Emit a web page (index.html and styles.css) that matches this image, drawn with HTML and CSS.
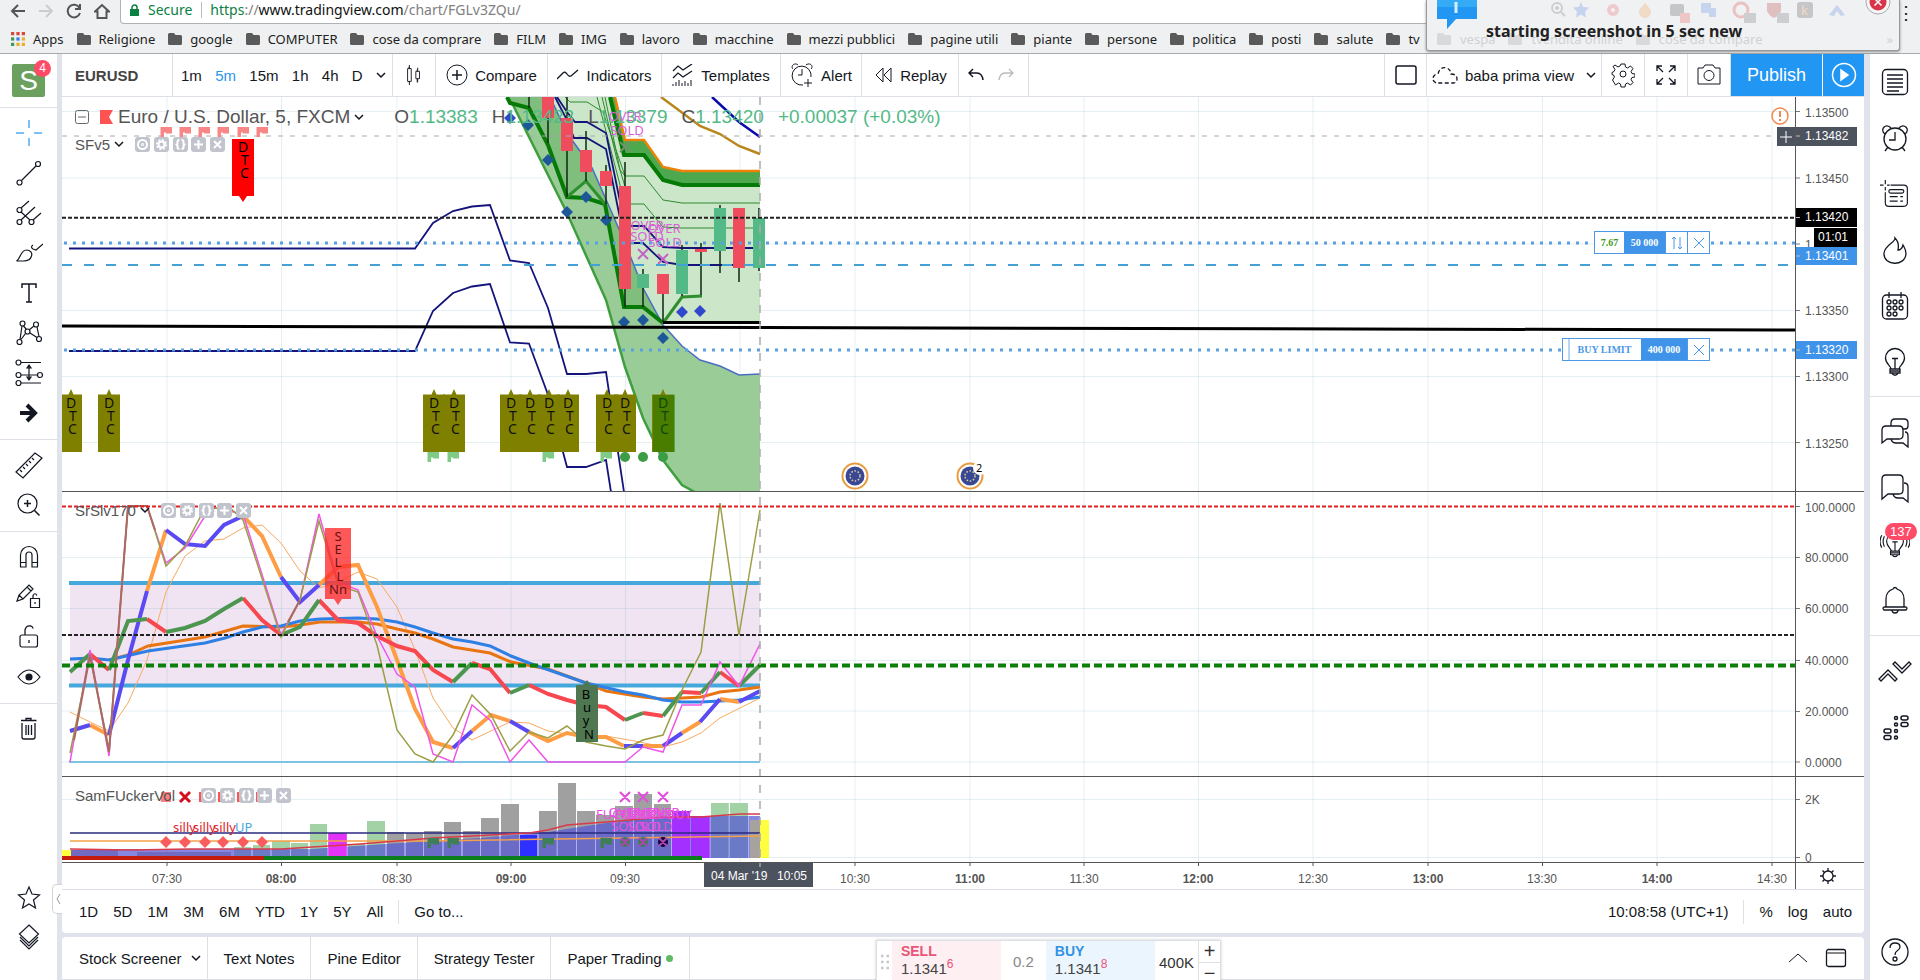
FILE: index.html
```html
<!DOCTYPE html>
<html lang="en">
<head>
<meta charset="utf-8">
<title>EURUSD chart</title>
<link rel="stylesheet" href="styles.css">
</head>
<body>
<svg class="defs" aria-hidden="true">
  <symbol id="folder" viewBox="0 0 14 12"><path d="M0 1.5Q0 0 1.5 0H6L7.5 2H12.500Q14 2 14 3.500V10.500Q14 12 12.500 12H1.500Q0 12 0 10.500Z" fill="#5a5a5a"/></symbol>
  <symbol id="chev" viewBox="0 0 10 10"><path d="M1 3l4 4 4-4"/></symbol>
  <symbol id="flag" viewBox="-6 -5 12 10"><path d="M-5.500-5H6V1.500H0V0.500H-2V5H-5.500Z"/></symbol>
  <symbol id="bulb" viewBox="0 0 30 30"><path d="M11 22c0-3-5.500-5-5.500-11a9.500 9.500 0 0 1 19 0c0 6-5.500 8-5.500 11M10 22h10v4H10zM10 24h10M12 26c1 3 5 3 6 0M15 22V12M12 11.500h6"/></symbol>
  <symbol id="lg-tools" viewBox="0 0 92 15">
    <g fill="#c1c4cd"><rect width="15" height="15" rx="3"/><rect x="19" width="15" height="15" rx="3"/><rect x="38" width="15" height="15" rx="3"/><rect x="56" width="15" height="15" rx="3"/><rect x="75" width="15" height="15" rx="3"/></g>
    <g fill="none" stroke="#fff" stroke-width="2"><circle cx="7.500" cy="7.500" r="4.500"/><circle cx="7.500" cy="7.500" r=".5"/><circle cx="26.500" cy="7.500" r="3"/><circle cx="26.500" cy="7.500" r="4.500" stroke-dasharray="2 1.500"/><path d="M44.500 3q-2 0-2 2v1.500l-1 1 1 1V10q0 2 2 2M46.500 3q2 0 2 2v1.500l1 1-1 1V10q0 2-2 2M63.500 3v9M59 7.500h9M79 4l7 7M86 4l-7 7"/></g>
  </symbol>
  <symbol id="dtc" viewBox="0 0 24 70" overflow="visible"><path d="M1 6.500H9.500L12 1l2.500 5.500H23V64H1Z" fill="#808000"/><g fill="#111" font-size="14"><text x="7" y="20">D</text><text x="10" y="33">T</text><text x="9" y="46">C</text></g></symbol>
</svg>

<header class="browser">
  <div class="address-row">
    <nav class="nav-icons" aria-label="Browser">
      <button aria-label="Back"><svg viewBox="0 0 16 16"><path d="M8 2L2 8l6 6M2 8h13"/></svg></button>
      <button class="off" aria-label="Forward"><svg viewBox="0 0 16 16"><path d="M8 2l6 6-6 6M14 8H1"/></svg></button>
      <button aria-label="Reload"><svg viewBox="0 0 16 16"><path d="M13.500 5A6.300 6.300 0 1 0 14 10M14 1v5H9"/></svg></button>
      <button aria-label="Home"><svg viewBox="0 0 16 16"><path d="M1 8.500L8 2l7 6.500H12.500V15h-9V8.500Z"/></svg></button>
    </nav>
    <div class="url">
      <svg viewBox="0 0 9 12" class="lock"><path d="M0 5h9v7H0z" fill="#0b8043"/><path d="M2 5V3.500a2.500 2.500 0 0 1 5 0V5" fill="none" stroke="#0b8043" stroke-width="1.500"/></svg>
      <span class="secure">Secure</span>
      <div class="address" role="textbox" aria-label="Address"><span class="https">https</span>://<b>www.tradingview.com</b>/chart/FGLv3ZQu/</div>
    </div>
    <span class="kebab">⋮</span>
  </div>
  <nav class="bookmarks" aria-label="Bookmarks">
    <a href="#"><svg class="apps" viewBox="0 0 13 13"><path d="M0 1.500h3M5 1.500h3M10 1.500h3" stroke="#d9493c"/><path d="M0 6.500h3" stroke="#3d9b52"/><path d="M5 6.500h3" stroke="#3b7ded"/><path d="M10 6.500h3" stroke="#e8b02e"/><path d="M0 11.500h3" stroke="#3d9b52"/><path d="M5 11.500h3M10 11.500h3" stroke="#e8b02e"/></svg>Apps</a>
    <a href="#"><svg><use href="#folder"/></svg>Religione</a>
    <a href="#"><svg><use href="#folder"/></svg>google</a>
    <a href="#"><svg><use href="#folder"/></svg>COMPUTER</a>
    <a href="#"><svg><use href="#folder"/></svg>cose da comprare</a>
    <a href="#"><svg><use href="#folder"/></svg>FILM</a>
    <a href="#"><svg><use href="#folder"/></svg>IMG</a>
    <a href="#"><svg><use href="#folder"/></svg>lavoro</a>
    <a href="#"><svg><use href="#folder"/></svg>macchine</a>
    <a href="#"><svg><use href="#folder"/></svg>mezzi pubblici</a>
    <a href="#"><svg><use href="#folder"/></svg>pagine utili</a>
    <a href="#"><svg><use href="#folder"/></svg>piante</a>
    <a href="#"><svg><use href="#folder"/></svg>persone</a>
    <a href="#"><svg><use href="#folder"/></svg>politica</a>
    <a href="#"><svg><use href="#folder"/></svg>posti</a>
    <a href="#"><svg><use href="#folder"/></svg>salute</a>
    <a href="#"><svg><use href="#folder"/></svg>tv</a>
  </nav>
  <aside class="notice">
    <svg class="bubble" viewBox="0 0 40 29"><path d="M0 0h40v19H19l-9 10V19H0z" fill="#2196f3"/><path d="M0 0h40v7H0z" fill="#35abf5"/><path d="M19 2v11" stroke="#d6effc" stroke-width="3"/></svg>
    <svg class="ghosts" viewBox="0 0 310 28"><g opacity=".22">
      <g fill="none" stroke="#555" stroke-width="2"><circle cx="8" cy="8" r="5"/><path d="M12 12l4 4M6 8h4M8 6v4"/></g>
      <path d="M32 2l2 5 6 .5-4 4 1 6-5-3-5 3 1-6-4-4 6-.5z" fill="#2f6fe0"/><circle cx="64" cy="10" r="6" fill="#e44"/><circle cx="64" cy="10" r="2" fill="#fff"/>
      <path d="M96 2c1 4 6 6 6 10a6 6 0 0 1-12 0c0-4 5-6 6-10z" fill="#f08a1d"/><rect x="121" y="4" width="14" height="12" rx="2" fill="#333"/><rect x="131" y="13" width="10" height="10" fill="#e33"/>
      <path d="M152 3h10v10h-10zM160 8h7v9h-7z" fill="#3c70dd"/><circle cx="192" cy="10" r="7" fill="none" stroke="#d22" stroke-width="3"/><path d="M195 13h12v10h-12z" fill="#555"/>
      <path d="M218 3h14v8q-2 5-7 7-5-2-7-7z" fill="#a11"/><path d="M228 13h12v10h-12z" fill="#555"/><rect x="248" y="2" width="16" height="16" rx="3" fill="#333"/><text x="252" y="15" fill="#f82" font-size="13">k</text>
      <path d="M280 15l8-10 8 10-4 1-4-5-3 5z" fill="#3c70dd"/></g></svg>
    <span class="ghost-links"><i><svg><use href="#folder"/></svg>vespa</i><i><svg><use href="#folder"/></svg>tvendita online</i><i><svg><use href="#folder"/></svg>cose da compare</i><i class="more">»</i></span>
    <strong>starting screenshot in 5 sec new</strong>
    <button class="close" aria-label="Close"><svg viewBox="0 0 26 26"><circle cx="13" cy="13" r="12" fill="#f6f6f6" stroke="#aaa"/><circle cx="13" cy="13" r="8.500" fill="#d8344a"/><path d="M9.500 9.500l7 7M16.500 9.500l-7 7" stroke="#fff" stroke-width="1.500"/></svg></button>
  </aside>
</header>

<div class="app">
  <nav class="left-bar" aria-label="Drawing tools">
    <div class="profile"><button class="avatar">S</button><span class="badge">4</span></div>
    <div class="tools">
      <button aria-label="Cross"><svg viewBox="0 0 28 28" class="cross"><path d="M14 1v8M14 19v8M1 14h8M19 14h8"/></svg></button>
      <button aria-label="Trend line"><svg viewBox="0 0 28 28"><circle cx="4.500" cy="23.500" r="2.500"/><circle cx="23" cy="5" r="2.500"/><path d="M6.500 21.500L21 7"/></svg></button>
      <button aria-label="Pitchfork"><svg viewBox="0 0 28 28"><circle cx="4.500" cy="11" r="2.500"/><circle cx="4.500" cy="23" r="2.500"/><circle cx="16.500" cy="23" r="2.500"/><path d="M6 9l8-7M6 21L20 8M18 21l8-7M6 13l9 8"/></svg></button>
      <button aria-label="Brush"><svg viewBox="0 0 28 28"><path d="M1.500 22c4-2 4-11 10-11 4 0 6 3 5 6-1 4-5 5-8 5zM28 5l-7 6-3-1q-3-2 0-4"/></svg></button>
      <button aria-label="Text"><svg viewBox="0 0 28 28"><path d="M7 9V5h14v4M14 5v18M11 23h6" stroke-width="1.500"/></svg></button>
      <button aria-label="Pattern"><svg viewBox="0 0 28 28"><circle cx="7.500" cy="4.500" r="2.500"/><circle cx="21" cy="5.500" r="2.500"/><circle cx="12.500" cy="12.500" r="2.500"/><circle cx="4.500" cy="23" r="2.500"/><circle cx="24" cy="20" r="2.500"/><path d="M7 7L5 20.500M8.500 7l3 3.500M19 7l-5 4M22 8l2 9.500M10.500 14.500l-4.500 6M15 14l7 4.500"/></svg></button>
      <button aria-label="Projection"><svg viewBox="0 0 28 28"><circle cx="3.500" cy="3.500" r="2.500"/><circle cx="3.500" cy="16" r="2.500"/><circle cx="25" cy="16" r="2.500"/><circle cx="3.500" cy="24" r="2.500"/><path d="M6 3.500h20M6 16h16.500M6 24h20M14 7v13M14 6l-2 3h4zM14 21l-2-3h4z"/></svg></button>
      <button aria-label="Arrow"><svg viewBox="0 0 28 28"><path d="M5 14h14M12 6l8 8-8 8" stroke-width="4"/></svg></button>
    </div>
    <div class="tools">
      <button aria-label="Measure"><svg viewBox="0 0 28 28"><path d="M1 21L20 2l7 5L8 27zM5 19l2 2M8 16l2 2M11 13l2 2M14 10l2 2M17 7l2 2"/></svg></button>
      <button aria-label="Zoom in"><svg viewBox="0 0 28 28"><circle cx="12.500" cy="12.500" r="9.500"/><path d="M19.500 19.500l5 5M9 12.500h7M12.500 9v7" stroke-width="1.500"/></svg></button>
    </div>
    <div class="tools">
      <button aria-label="Magnet"><svg viewBox="0 0 28 28"><path d="M5.500 24V12a8.500 8.500 0 0 1 17 0v12h-5.500V12a3 3 0 0 0-6 0v12zM5.500 19.500H11M17 19.500h5.500"/></svg></button>
      <button aria-label="Stay in drawing mode"><svg viewBox="0 0 28 28"><path d="M2 18l2-6L14 2l4 4L8 16zM4 12l4 4M12 4l4 4M15.500 15.500h9v9h-9zM18 15.500v-3q2-3.500 4 0M20 19v2"/></svg></button>
      <button aria-label="Lock"><svg viewBox="0 0 28 28"><rect x="5" y="12" width="17.500" height="12" rx="2"/><path d="M10 12V7q1-5 6-4 2 1 2 2.500M14 17v3" stroke-width="1.300"/></svg></button>
      <button aria-label="Hide"><svg viewBox="0 0 28 28"><path d="M3 14q11-14 22 0-11 14-22 0z"/><circle cx="14" cy="14" r="3" fill="#131722"/></svg></button>
    </div>
    <div class="tools last">
      <button aria-label="Remove"><svg viewBox="0 0 28 28"><path d="M7 8v14q0 2 2 2h9q2 0 2-2V8M6 5.500h15.500M11 5.500V3.500h5v2M11 10v10M13.500 10v10M16.500 10v10" stroke-width="1.300"/></svg></button>
    </div>
    <div class="tools bottom">
      <button aria-label="Favorites"><svg viewBox="0 0 28 28"><path d="M14 3l3 7 7.500 1-6 5 2 8-6.500-4-6.500 4 2-8-6-5L11 10z"/></svg></button>
      <button aria-label="Object tree"><svg viewBox="0 0 28 28"><path d="M14 1l9.500 9L14 19 4.500 10zM5 13l9 9 9-9M5 16l9 9 9-9"/></svg></button>
    </div>
    <button class="handle" aria-label="Collapse"><svg viewBox="0 0 6 12"><path d="M5 1L2 6l3 5"/></svg></button>
  </nav>

  <main class="center">
    <section class="chart-card">
      <div class="top-bar">
        <button class="symbol">EURUSD</button>
        <div class="intervals"><button>1m</button><button class="on">5m</button><button>15m</button><button>1h</button><button>4h</button><button>D</button><button aria-label="More intervals"><svg class="chev"><use href="#chev"/></svg></button></div>
        <button class="cell w43" aria-label="Candles"><svg class="i20" viewBox="0 0 20 24"><path d="M4.500 3v17M13.500 6v14"/><path d="M3 5h4v14H3zM12 8h4v8h-4z" fill="#fff"/><path d="M5 1v4M5 19v4M14 4v4M14 16v4"/></svg></button>
        <button class="cell w112"><svg class="i22" viewBox="0 0 22 22"><circle cx="11" cy="11" r="10"/><path d="M11 6v10M6 11h10" stroke-width="1.500"/></svg>Compare</button>
        <button class="cell w114"><svg class="i22" viewBox="0 0 22 22"><path d="M0 15l6-6q2-2 4 1t4 2l7-6" stroke-width="1.300"/></svg>Indicators</button>
        <button class="cell w118"><svg class="i22" viewBox="0 0 22 22"><path d="M1 7l5-5 5 4 9-6M1 14l5-5 5 4 9-6" stroke-width="1.300"/><path d="M1 20v2M4 18v4M7 16v6M10 19v3M13 17v5M16 19v3M19 16v6"/></svg>Templates</button>
        <button class="cell w81"><svg class="i24" viewBox="0 0 24 26"><path d="M13 23A9.500 9.500 0 1 1 21 15M12 7v6H8M3 7C0 4 5 0 8 3M16 3c4-3 8 1 5 4M18 17v8M14 21h8"/></svg>Alert</button>
        <button class="cell w96"><svg class="i20" viewBox="0 0 20 20"><path d="M10 3L3 10l7 7zM18 3l-7 7 7 7z"/></svg>Replay</button>
        <div class="cell undo"><button aria-label="Undo"><svg class="i16" viewBox="0 0 16 16"><path d="M5 2L1 6l4 4M1 6h8q5 0 6 7" stroke-width="1.500"/></svg></button><button aria-label="Redo"><svg class="i16 off" viewBox="0 0 16 16"><path d="M11 2l4 4-4 4M15 6H7Q2 6 1 13" stroke-width="1.300"/></svg></button></div>
        <span class="grow"></span>
        <button class="cell w43 first" aria-label="Layout"><svg class="i24" viewBox="0 0 24 24"><rect x="2" y="3" width="20" height="18" rx="2" stroke-width="1.500"/></svg></button>
        <button class="cell w175"><svg class="i26" viewBox="0 0 26 20"><path d="M4 18q-5-3-2-7 1-2 4-2 2-8 9-6 4 2 4 6 6 0 6 5 0 3-3 4z" stroke-dasharray="4 2.500" stroke-width="1.300"/></svg>baba prima view<svg class="chev"><use href="#chev"/></svg></button>
        <button class="cell w43" aria-label="Settings"><svg class="i24" viewBox="0 0 24 24"><path d="M10 2h4l.5 3 2 1 3-2 2.500 2.500-2 3 1 2 3 .5v3l-3 .5-1 2 2 3-2.500 2.500-3-2-2 1-.5 3h-4l-.5-3-2-1-3 2L1.500 18l2-3-1-2L1 12.500v-2l2-1 1-2-2-3L4 3l3 2 2-1z" transform="translate(0 -1)"/><circle cx="12" cy="11" r="3"/></svg></button>
        <button class="cell w43" aria-label="Fullscreen"><svg class="i20" viewBox="0 0 20 20"><path d="M1 6V1h5M1 1l6 6M14 1h5v5M19 1l-6 6M1 14v5h5M1 19l6-6M19 14v5h-5M19 19l-6-6" stroke-width="1.300"/></svg></button>
        <button class="cell w43" aria-label="Snapshot"><svg class="i24" viewBox="0 0 24 24"><path d="M1 5h5l2-3h8l2 3h5v16H1z"/><circle cx="12" cy="12.500" r="5"/></svg></button>
        <button class="publish">Publish</button><button class="play" aria-label="Play"><svg class="i26" viewBox="0 0 26 26"><circle cx="13" cy="13" r="11.500"/><path d="M10 8l7 5-7 5z" fill="#fff"/></svg></button>
      </div>

      <div class="chart">
        <div class="plot-wrap">
          <svg class="plot" role="img" aria-label="Price chart">
            <defs>
              <clipPath id="p1"><rect x="62" y="97" width="4000" height="394"/></clipPath>
            </defs>
            <g transform="translate(-62 -97)">
              <path class="grid" d="M167 97V862M281.500 97V862M397 97V862M511 97V862M625.500 97V862M740 97V862M855 97V862M970 97V862M1084 97V862M1198.500 97V862M1313 97V862M1428 97V862M1542.500 97V862M1657 97V862M1772 97V862M62 111.500H4000M62 178H4000M62 244H4000M62 310.500H4000M62 376.500H4000M62 442.500H4000M62 557.500H4000M62 608.500H4000M62 660.500H4000M62 711H4000M62 762H4000M62 799.500H4000M62 857.500H4000"/>
              <g clip-path="url(#p1)">
                <path class="navy" d="M69 248.500H415L433 223L453 211L472 206.500L490 205L510 260.500L529 263L548 308L567 374H586L606 372L624 492M69 351H415L433 311L453 293L472 286.500L490 284L510 342.500L529 343.500L547 392L563 452L567 467H586L606 460L611 492"/>
                <path d="M507 97L513 105L567 213L606 300L625 367L643 418L663 460L682 485L700 495H760V374L739 375L720 366L700 360L682 346L663 325L643 288L625 243L605 197L592 168L567 133L550 97Z" fill="#9acc97"/>
                <path d="M507 97L510 103L529 108L548 145L567 197L586 181L605 204L624 307H643L663 323L643 288L625 243L605 197L592 168L567 133L550 97Z" fill="#80be7d"/>
                <path d="M550 97L567 133L592 168L605 197L625 243L643 288L663 323H760V171H682L663 167L644 140H625L615 97Z" fill="#cbe6c9"/>
                <path d="M610 97L624 155H644L663 180L682 185H760V171H682L663 167L644 140H625L615 97Z" fill="#4ea94e"/>
                <path d="M507 97L513 105L567 213L606 300L625 367L643 418L663 460L682 485L700 495" class="ln" stroke="#3f9f3f" stroke-width="2.500"/>
                <path class="ln" stroke="#4b6ec0" stroke-width="1.500" d="M550 97L567 133L592 168L605 197L625 243L643 288L663 325L682 346L700 360L720 366L739 375L760 374"/>
                <path class="ln" stroke="#2f8a2f" stroke-width="1" d="M565 97L570 102H587L603 112L625 176H644L663 200L682 203H760M597 97L625 204H644L663 227L682 228H760M605 97L620 170L625 176M602 97L617 160L626 190"/>
                <path class="navy" d="M557 97L567 112L575 122H587L606 133L625 226H644L663 247L682 248H760M555 97L567 120L574 138H587L606 149L625 243H643L663 262L682 265H760"/>
                <path class="ln" stroke="#ee8208" stroke-width="2.500" d="M615 97L625 140H644L663 167L682 171H760"/>
                <path class="ln" stroke="#067a06" stroke-width="4" d="M610 97L624 155H644L663 180L682 185H760"/>
                <path class="ln" stroke="#067a06" stroke-width="4" d="M507 97L510 103L529 108L548 145L567 197L586 198L605 204L624 307H643L663 323"/>
                <path class="ln" stroke="#2f8f2f" stroke-width="3" d="M567 197L586 181L605 204M663 323L682 297L702 296"/>
                <path class="ln" stroke="#b8861b" stroke-width="2.500" d="M661 97L700 126L720 134L739 146L760 154"/>
                <path class="ln" stroke="#0a0aae" stroke-width="2.500" d="M712 97L739 122L760 137"/>
                <path class="ln" stroke="#0d2a12" stroke-width="1.500" d="M529 97V108M548 97V143M567 97V197M586 131V181M606 165V204M625 162V307M643 269V307M663 274V322M682 245V296M701 243V295M720 205V273M739 208V282M759 208V271"/>
                <path fill="#ef4d5e" d="M542 97h12v21h-12zM561 118h12v33h-12zM580 150h12v22h-12zM600 171h12v15h-12zM619 186h12v103h-12zM657 274h12v20h-12zM695 249h12v3h-12zM733 208h12v60h-12z"/>
                <path fill="#53b987" d="M637 274h12v14h-12zM676 250h12v44h-12zM714 208h12v43h-12zM753 218h12v50h-12z"/>
                <path fill="#1d5799" d="M548 154l6 6-6 6-6-6zM567 206l6 6-6 6-6-6zM586 191l6 6-6 6-6-6zM606 214l6 6-6 6-6-6zM624 316l6 6-6 6-6-6zM643 314l6 6-6 6-6-6zM663 332l6 6-6 6-6-6zM528 119l6 6-6 6-6-6z"/>
                <path fill="#3048cc" d="M510 112l6 6-6 6-6-6zM682 306l6 6-6 6-6-6zM700 305l6 6-6 6-6-6z"/>
                <path d="M663 322.500H761" stroke="#000" stroke-width="3"/>
                <g class="pink" font-size="13" text-anchor="middle"><text x="625" y="121">OVER</text><text x="627" y="135">SOLD</text><text x="647" y="230">OVER</text><text x="647" y="241">SOLD</text><text x="664" y="233">OVER</text><text x="665" y="247">SOLD</text></g>
                <path class="ln" stroke="#c464c6" stroke-width="2" d="M638 249l10 10M648 249l-10 10M658 254l10 10M668 254l-10 10"/><path class="ln" stroke="#72926f" stroke-width="2" d="M620 142l10 10M630 142l-10 10"/>
                <path class="ln" d="M62 136H4000" stroke="#aaa" stroke-dasharray="5 7"/>
                <path class="ln" d="M62 217.700H4000" stroke="#222" stroke-width="2" stroke-dasharray="4 2"/>
                <path class="ln" d="M62 265H4000" stroke="#43a1d6" stroke-width="2" stroke-dasharray="10 12"/>
                <path class="ln" d="M64 243H4000M64 350H4000" stroke="#5a9fe0" stroke-width="3" stroke-dasharray="3 6"/>
                <path class="ln" d="M62 326L1795 330L4000 335" stroke="#000" stroke-width="3"/>
                <g><use href="#dtc" x="59" y="388" width="24" height="70"/><use href="#dtc" x="97" y="388" width="24" height="70"/><use href="#dtc" x="422" y="388" width="24" height="70"/><use href="#dtc" x="442" y="388" width="24" height="70"/><use href="#dtc" x="499" y="388" width="24" height="70"/><use href="#dtc" x="518" y="388" width="24" height="70"/><use href="#dtc" x="537" y="388" width="24" height="70"/><use href="#dtc" x="556" y="388" width="24" height="70"/><use href="#dtc" x="595" y="388" width="24" height="70"/><use href="#dtc" x="613" y="388" width="24" height="70"/><use href="#dtc" x="651" y="388" width="24" height="70"/><path d="M653 395h22v57h-22z" fill="#107a00" opacity=".5"/></g>
                <g fill="#7fcb85"><use href="#flag" x="427" y="452" width="12" height="10"/><use href="#flag" x="447" y="452" width="12" height="10"/><use href="#flag" x="542" y="452" width="12" height="10"/><use href="#flag" x="600" y="452" width="12" height="10"/></g>
                <g fill="#3b9d45"><circle cx="625" cy="457" r="5"/><circle cx="643" cy="457" r="5"/><circle cx="663" cy="457" r="5"/></g>
                <g fill="#f88686"><use href="#flag" x="160" y="127" width="12" height="10"/><use href="#flag" x="179" y="127" width="12" height="10"/><use href="#flag" x="198" y="127" width="12" height="10"/><use href="#flag" x="217" y="127" width="12" height="10"/><use href="#flag" x="237" y="127" width="12" height="10"/><use href="#flag" x="256" y="127" width="12" height="10"/></g>
                <path d="M232 139H254V196H247L243 202L239 196H232Z" fill="#f00"/><g font-size="14"><text x="238" y="152">D</text><text x="241" y="165">T</text><text x="240" y="178">C</text></g>
                <g id="eu"><circle cx="855" cy="476" r="12.500" fill="#fff" stroke="#e99a3c" stroke-width="2"/><circle cx="855" cy="476" r="9.500" fill="#3a4794"/><circle cx="855" cy="476" r="5" fill="none" stroke="#d8cf9c" stroke-width="1.500" stroke-dasharray="1.500 1.700"/></g>
                <use href="#eu" x="115"/><circle cx="980" cy="468" r="7" fill="#fff"/><text x="976" y="472" font-size="11">2</text>
              </g>

              <path d="M70 583H760V685.500H70Z" fill="#f0e4f2"/>
              <path class="grid" d="M167 583V685M281.500 583V685M397 583V685M511 583V685M625.500 583V685M740 583V685M70 608.500H760M70 660.500H760"/>
              <path d="M69 583H760M69 685.500H760" stroke="#45a8dc" stroke-width="4"/><path d="M69 762H760" stroke="#7ec3e2" stroke-width="2"/>
              <path class="ln" stroke="#f9a960" d="M70 712L90 722L109 731L128 703L147 660L166 592L185 556L205 541L224 539L243 528L262 525L281 543L300 571L319 588L338 582L358 572L377 579L397 607L415 650L433 698L453 728L472 740L510 722L529 723L548 731L586 737L606 736L640 742L663 747L682 742L701 733L720 718L760 698"/>
              <path class="ln" stroke="#e97412" stroke-width="3" d="M109 660L128 655L148 646L167 643L205 637L243 626L281 627L300 625L320 622H358L377 624L397 629L415 633L433 639L453 647L490 653L511 662L548 669L586 683L606 691L643 697L663 699L701 697L720 692L739 690L760 687"/>
              <path class="ln" stroke="#2f80e4" stroke-width="3" d="M70 659L90 658L109 660L148 651L205 643L225 638L243 632L262 627L281 626L300 621L320 619L358 618L377 619L397 622L415 627L433 633L453 639L472 642L490 646L511 656L529 663L586 683L625 692L643 695L663 700L682 702H701L739 700L760 697"/>
              <g class="ln" stroke-width="4">
                <path stroke="#ff9d45" d="M90 725L109 735M147 591L166 530M243 516L262 536L281 577M319 585L338 567L358 565L377 607L397 660L415 709L433 742L453 748M472 731L491 715L510 721M529 732L548 741L567 733L586 737H606L624 746M643 746H663M682 733L700 722M720 699L739 702"/>
                <path stroke="#5a4af2" d="M70 731L90 725M109 735L128 660L147 591M166 530L185 544L205 546L224 525L243 516M281 577L300 602L319 585M453 748L472 731M510 721L529 732M624 746H643M663 746L682 733M700 722L720 699M739 702L760 691"/>
                <path stroke="#f8474f" d="M90 654L109 670M147 619L166 632M243 598L262 620L281 635M319 600L338 620L358 623L377 636L397 646L415 651L433 670L453 682M472 663L490 669L510 693M529 685L548 694L567 700L586 705L606 707L625 720M643 713L663 716M682 692L701 693M720 672L739 686"/>
                <path stroke="#4c9650" d="M70 672L90 654M109 670L128 621L147 619M166 632L185 628L205 621L224 609L243 598M281 635L300 627L319 600M453 682L472 663M510 693L529 685M625 720L643 713M663 716L682 692M701 693L720 672M739 686L760 665"/>
              </g>
              <path class="ln" stroke="#ef55e6" stroke-width="1.500" d="M70 762L90 650L109 756L128 506H147L166 563L185 548L205 516L215 508L243 514L281 635L300 600L319 514L338 582L358 590L377 636L397 674L415 687L433 754L453 762L472 705L491 721L510 762L529 740L548 762H625L643 747L663 752L682 705H701L720 662L739 686L760 644"/>
              <path class="ln" stroke="#9c9e45" stroke-width="1.500" d="M70 753L90 656L109 750L128 506H147L166 566L185 546L205 508H230L243 520L281 637L300 600L319 521L338 585L358 592L377 645L397 730L415 754L433 762L453 735L472 695L491 715L510 751L529 732L548 738L567 726L586 742L606 746L625 749L643 740L663 735L682 690L701 652L720 503L739 635L760 510"/>
              <path class="ln" stroke="#aa6a62" stroke-width="2" d="M74 740L90 655L109 752L128 506H147L155 530M288 622L300 600"/>
              <path class="ln" d="M62 506.500H4000" stroke="#e02020" stroke-width="2" stroke-dasharray="4 2"/>
              <path class="ln" d="M62 635H4000" stroke="#222" stroke-width="2" stroke-dasharray="4 2"/>
              <path class="ln" d="M62 665.500H4000" stroke="#0a800a" stroke-width="4" stroke-dasharray="8 4"/>
              <path d="M325 528H351V599H342L338 605L334 599H325Z" fill="#ff2e2e" opacity=".8"/>
              <g font-size="13" fill="#611" text-anchor="middle"><text x="338" y="541">S</text><text x="338" y="554">E</text><text x="338" y="567">L</text><text x="340" y="581">L</text><text x="338" y="594">Nn</text></g>
              <path d="M576 685H583L587 680L591 685H598V742H576Z" fill="#4f7852"/>
              <g font-size="13" text-anchor="middle"><text x="586" y="699">B</text><text x="587" y="712">u</text><text x="586" y="725">y</text><text x="589" y="739">N</text></g>

              <g fill="#a0a0a0"><path d="M387 832h17v26h-17zM406 833h17v25h-17zM424 831h18v27h-18zM444 822h17v36h-17zM463 831h17v27h-17zM481 818h18v40h-18zM501 804h18v54h-18zM539 811h18v47h-18zM558 783h18v75h-18zM577 811h18v47h-18zM596 815h18v43h-18zM615 806h18v52h-18zM634 794h18v64h-18zM654 804h17v54h-17z"/></g>
              <g fill="#a3d2a6"><path d="M234 847h17v11h-17zM253 845h17v13h-17zM272 841h18v17h-18zM291 843h17v15h-17zM310 824h17v34h-17zM348 844h17v14h-17zM367 821h18v37h-18zM711 803h18v55h-18zM730 803h18v55h-18z"/></g>
              <path fill="#b8a294" d="M71 850h47v8H71zM137 852h94v6h-94z"/>
              <path fill="#5254d6" opacity=".7" d="M71 850L118 849H240L310 849L400 843L480 838L548 832L567 829L606 823L643 819L663 816H760V858H71Z"/>
              <path fill="#a330ff" d="M672 811h18v47h-18zM691 816h19v42h-19z"/><path fill="#e233f7" d="M328 833h19v25h-19z"/><path fill="#2e30ff" d="M520 835h17v23h-17z"/>
              <path fill="#ff0" opacity=".75" d="M62 850h9v8h-9zM760 820h9v38h-9z"/><path fill="#a7a29d" d="M750 820h10v38h-10z"/>
              <path d="M252 845v13M271 841v17M290.500 841v17M309 824v34M328 824v34M347 833v25M366 821v37M386 821v37M405 832v26M423.500 831v27M443 822v36M462 822v36M480.500 818v40M500 804v54M519.500 804v54M538 811v47M557 783v75M576.500 783v75M595.500 811v47M614.500 806v52M633.500 794v64M653 794v64M671.500 804v54M710 803v55M729 803v55M748.500 803v55" stroke="#fff" opacity=".35"/>
              <path class="ln" stroke="#2a2a80" stroke-width="1.500" d="M70 833H760"/><path class="ln" stroke="#f5a04a" stroke-width="1.500" d="M70 841H433L760 836"/>
              <path class="ln" stroke="#d83a4c" stroke-width="1.500" d="M70 849L130 850L190 849L281 849L360 844L397 841L433 838L529 833L548 830L567 825L606 822L663 817H700L740 814H760"/>
              <path d="M62 858H264" stroke="#c31a0c" stroke-width="4"/><path d="M264 858H702" stroke="#0b7d1c" stroke-width="4"/>
              <path fill="#f95c5c" d="M166 836l6 6-6 6-6-6zM185 836l6 6-6 6-6-6zM205 836l6 6-6 6-6-6zM223 836l6 6-6 6-6-6zM243 836l6 6-6 6-6-6zM262 836l6 6-6 6-6-6z"/>
              <g font-size="13" fill="#e0222a"><text x="173" y="832">silly</text><text x="193" y="832">silly</text><text x="213" y="832">silly</text><text x="235" y="832" fill="#45a8dc">UP</text></g>
              <g fill="#ff8080"><path d="M161 792h10v10h-10z"/><path fill="#ff5252" d="M199 792h3v10h-3zM218 792h3v10h-3zM237 792h3v10h-3zM256 792h3v10h-3z"/></g><path d="M180 792l10 10M190 792l-10 10" stroke="#d3101c" stroke-width="3"/>
              <g fill="#3f7f57"><use href="#flag" x="427" y="838" width="12" height="10"/><use href="#flag" x="447" y="838" width="12" height="10"/><use href="#flag" x="542" y="838" width="12" height="10"/><use href="#flag" x="600" y="838" width="12" height="10"/><circle cx="625" cy="842" r="5"/><circle cx="643" cy="842" r="5"/><circle cx="663" cy="842" r="5" fill="#103"/></g>
              <path class="ln" stroke="#e44bdf" stroke-width="2" d="M620 792l10 10M630 792l-10 10M638 792l10 10M648 792l-10 10M658 792l10 10M668 792l-10 10"/>
              <path class="ln" stroke="#b044b5" stroke-width="2" d="M621 838l8 8M629 838l-8 8M639 838l8 8M647 838l-8 8M659 838l8 8M667 838l-8 8"/>
              <g class="pink vol" font-size="13" text-anchor="middle"><text x="625" y="819">FUCKBUY</text><text x="644" y="819">FUCKBUY</text><text x="663" y="819">FUCKBUY</text><text x="625" y="817">OVER</text><text x="644" y="817">OVER</text><text x="663" y="817">OVER</text><text x="628" y="831">SOLD</text><text x="644" y="831">SOLD</text><text x="656" y="831">SOLD</text></g>
              <path class="ln" d="M760 97V862" stroke="#aaa" stroke-width="1.500" stroke-dasharray="8 8"/>
              <path d="M62 491.500H4000M62 776.500H4000" stroke="#555"/>
            </g>
          </svg>
          <div class="legend main"><svg class="box" viewBox="0 0 14 14"><rect x=".5" y=".5" width="13" height="13" rx="2"/><path d="M3 7h8"/></svg><svg class="mark" viewBox="0 0 13 14"><path d="M0 0h13l-4 7 4 7H0z" fill="#ff5252"/></svg><span class="name">Euro / U.S. Dollar, 5, FXCM</span><svg class="chev"><use href="#chev"/></svg>
            <span class="ohlc"><span>O<b>1.13383</b></span><span>H<b>1.13423</b></span><span>L<b>1.13379</b></span><span>C<b>1.13420</b></span><b>+0.00037 (+0.03%)</b></span></div>
          <div class="legend l1">SFv5<svg class="chev"><use href="#chev"/></svg><svg class="lt"><use href="#lg-tools"/></svg></div>
          <div class="legend l2">SrSlv170<svg class="chev"><use href="#chev"/></svg><svg class="lt"><use href="#lg-tools"/></svg></div>
          <div class="legend l3">SamFUckerVol<svg class="lt"><use href="#lg-tools"/></svg></div>
          <div class="order o1"><span class="pl">7.67</span><span class="qty">50 000</span><button aria-label="Reverse"><svg viewBox="0 0 14 14"><path d="M4 13V1M2 3l2-2 2 2M10 1v12M8 11l2 2 2-2"/></svg></button><button aria-label="Close position"><svg viewBox="0 0 14 14"><path d="M2 2l10 10M12 2L2 12"/></svg></button></div>
          <div class="order o2"><span class="lim">BUY LIMIT</span><span class="qty">400 000</span><button aria-label="Cancel order"><svg viewBox="0 0 14 14"><path d="M2 2l10 10M12 2L2 12"/></svg></button></div>
          <svg class="warn" viewBox="0 0 18 18"><circle cx="9" cy="9" r="8"/><path d="M9 4v6M9 12v2" stroke-width="2"/></svg>
          <svg class="plus" viewBox="0 0 18 19"><path d="M9 4v12M3 10h12"/></svg>
        </div>
        <svg class="prices" role="img" aria-label="Price scale"><g transform="translate(-1795 -97)">
          <path d="M1795.500 97V862" stroke="#555"/><path d="M1795 491.500h80M1795 776.500h80" stroke="#555"/>
          <path d="M1796 111.500h4M1796 178h4M1796 244h4M1796 310.500h4M1796 376.500h4M1796 442.500h4M1796 506.500h4M1796 557.500h4M1796 608.500h4M1796 660.500h4M1796 711.500h4M1796 762h4M1796 799.500h4M1796 857.500h4" stroke="#777"/>
          <g class="lab"><text x="1805" y="117">1.13500</text><text x="1805" y="183">1.13450</text><text x="1805" y="249">1</text><text x="1805" y="315">1.13350</text><text x="1805" y="381">1.13300</text><text x="1805" y="448">1.13250</text><text x="1805" y="512">100.0000</text><text x="1805" y="562">80.0000</text><text x="1805" y="613">60.0000</text><text x="1805" y="665">40.0000</text><text x="1805" y="716">20.0000</text><text x="1805" y="767">0.0000</text><text x="1805" y="804">2K</text><text x="1805" y="862">0</text></g>
          <path d="M1796 127h61v19h-61z" fill="#4c525e"/><path d="M1796 208h61v19h-61zM1814 228h43v19h-43z"/><path d="M1796 247h61v18h-61zM1796 341h61v18h-61z" fill="#3f94e9"/><path d="M1796 136h4M1796 217.500h4M1796 256h4M1796 350h4" stroke="#bbb"/>
          <g class="lab w"><text x="1805" y="140">1.13482</text><text x="1805" y="221">1.13420</text><text x="1818" y="241">01:01</text><text x="1805" y="260">1.13401</text><text x="1805" y="354">1.13320</text></g>
        </g></svg>
      </div>

      <div class="time-row">
        <svg class="times" role="img" aria-label="Time scale"><g transform="translate(-62 -862)">
          <path d="M62 862.500H4000" stroke="#555"/><path d="M167 863v3M281.500 863v3M397 863v3M511 863v3M625.500 863v3M855 863v3M970 863v3M1084 863v3M1198.500 863v3M1313 863v3M1428 863v3M1542.500 863v3M1657 863v3M1772 863v3" stroke="#555"/>
          <g class="lab mid"><text x="167" y="883">07:30</text><text class="bd" x="281" y="883">08:00</text><text x="397" y="883">08:30</text><text class="bd" x="511" y="883">09:00</text><text x="625" y="883">09:30</text><text x="855" y="883">10:30</text><text class="bd" x="970" y="883">11:00</text><text x="1084" y="883">11:30</text><text class="bd" x="1198" y="883">12:00</text><text x="1313" y="883">12:30</text><text class="bd" x="1428" y="883">13:00</text><text x="1542" y="883">13:30</text><text class="bd" x="1657" y="883">14:00</text><text x="1772" y="883">14:30</text></g>
          <path d="M704 863h109v24H704z" fill="#4c525e"/><path d="M760 863v4" stroke="#ccc"/><g class="lab w"><text x="711" y="880">04 Mar '19</text><text x="777" y="880">10:05</text></g>
        </g></svg>
        <button class="axis-set" aria-label="Scale settings"><svg viewBox="0 0 18 18"><circle cx="9" cy="9" r="5"/><path d="M9 1v3M9 14v3M1 9h3M14 9h3M3.500 3.500l2 2M12.500 12.500l2 2M14.500 3.500l-2 2M5.500 12.500l-2 2"/></svg></button>
      </div>

      <div class="range-row">
        <button>1D</button><button>5D</button><button>1M</button><button>3M</button><button>6M</button><button>YTD</button><button>1Y</button><button>5Y</button><button>All</button><span class="sep"></span><button>Go to...</button>
        <span class="grow"></span><button>10:08:58 (UTC+1)</button><span class="sep"></span><button>%</button><button>log</button><button>auto</button>
      </div>
    </section>

    <footer class="tabs">
      <button class="t1">Stock Screener<svg class="chev"><use href="#chev"/></svg></button><button>Text Notes</button><button>Pine Editor</button><button>Strategy Tester</button><button>Paper Trading<i class="dot"></i></button>
      <span class="grow"></span>
      <button class="bare" aria-label="Expand"><svg class="i20" viewBox="0 0 20 20"><path d="M1 14l9-8 9 8"/></svg></button>
      <button class="bare" aria-label="Maximize"><svg class="i22" viewBox="0 0 22 22"><rect x="1.500" y="2.500" width="19" height="17" rx="2" stroke-width="1.300"/><path d="M2 6h18" stroke-width="2" stroke="#888"/></svg></button>
      <div class="trade">
        <span class="grip"><svg viewBox="0 0 8 16"><path d="M0 2h8M0 8h8M0 14h8" stroke="#c4c7ce" stroke-width="2.500" stroke-dasharray="2.500 3"/></svg></span>
        <button class="sell"><b>SELL</b><span>1.1341<sup>6</sup></span></button>
        <span class="spread">0.2</span>
        <button class="buy"><b>BUY</b><span>1.1341<sup>8</sup></span></button>
        <input class="amount" value="400K" aria-label="Quantity">
        <span class="step"><button aria-label="Increase">+</button><button aria-label="Decrease">−</button></span>
      </div>
    </footer>
  </main>

  <nav class="right-bar" aria-label="Panels">
    <div class="grp">
      <button aria-label="Watchlist"><svg viewBox="0 0 30 30"><rect x="2.500" y="2.500" width="25" height="25" rx="4"/><path d="M7 8h16M7 12h16M7 16h16M7 20h16M7 24h12"/></svg></button>
      <button aria-label="Alerts"><svg viewBox="0 0 30 30"><circle cx="15" cy="16" r="11"/><path d="M15 9v8H9M5 11C-1 7 6-1 11 5M19 5c5-6 12 2 6 6M8 24l-3 4M22 24l3 4"/></svg></button>
      <button aria-label="Data window"><svg viewBox="0 0 34 34"><path d="M12 7h15q4 0 4 4v16q0 4-4 4H10q-4 0-4-4V15M6 1v5M6 9v4M0 7h4M8 7h3M11 20h9M23 20h3M11 25h9M23 25h3"/><rect x="10" y="12" width="17" height="4" rx="2"/></svg></button>
      <button aria-label="Hotlist"><svg viewBox="0 0 30 30"><path d="M15 3c1 4-10 7-11 15-1 13 21 14 22 1 0-5-2-7-3-9-1 4-3 5-5 5 1-5 0-9-3-12z"/></svg></button>
      <button aria-label="Calendar"><svg viewBox="0 0 30 30"><rect x="2.500" y="4" width="25" height="24" rx="4"/><path d="M9 1v6M21 1v6"/><circle cx="9" cy="11" r="2"/><circle cx="15" cy="11" r="2"/><circle cx="21" cy="11" r="2"/><circle cx="9" cy="17" r="2"/><circle cx="15" cy="17" r="2"/><circle cx="21" cy="17" r="2"/><circle cx="9" cy="23" r="2"/><circle cx="15" cy="23" r="2"/></svg></button>
      <button aria-label="Ideas"><svg viewBox="0 0 30 30"><use href="#bulb"/></svg></button>
    </div>
    <div class="grp">
      <button aria-label="Public chats"><svg viewBox="0 0 30 30"><path d="M2 25V12q0-4 4-4h13q4 0 4 4v5q0 4-4 4H7zM11 8V5q0-4 4-4h9q4 0 4 4v3q0 3-3 3h-2M25 14q3 0 3 4v11l-5-4h-7q-4 0-5-4"/></svg></button>
      <button aria-label="Private chats"><svg viewBox="0 0 30 30"><path d="M2 25V5q0-4 4-4h13q4 0 4 4v11q0 4-4 4H8zM24 9q4 0 4 4v15l-5-4h-5q-4 0-5-4"/></svg></button>
      <button class="notify" aria-label="Ideas stream"><svg viewBox="0 0 34 30"><use href="#bulb" x="2" width="30" height="30"/><path d="M5 5q-3 6 0 12M2 4q-4 7 0 14M29 5q3 6 0 12M32 4q4 7 0 14"/></svg><span class="count">137</span></button>
      <button aria-label="Notifications"><svg viewBox="0 0 30 30"><path d="M6 21V13c0-6 4-9 7-10 1-2 3-2 4 0 3 1 7 4 7 10v8M4 21h22q2 1 0 3H4q-2-2 0-3zM12 24c0 4 6 4 6 0"/></svg></button>
    </div>
    <div class="grp last">
      <button aria-label="Order panel"><svg class="wide" viewBox="0 0 36 24"><path d="M2 19l9-9 9 9-2 2-7-7-7 7zM16 4l2-2 7 7 7-7 2 2-9 9z"/></svg></button>
      <button aria-label="Depth of market"><svg viewBox="0 0 30 30"><g stroke-width="1.500"><circle cx="16" cy="5" r="1.500"/><circle cx="16" cy="11.500" r="1.500"/><circle cx="16" cy="18" r="1.500"/><circle cx="16" cy="24.500" r="1.500"/><rect x="21" y="3" width="7" height="4" rx="2"/><rect x="21" y="9.500" width="7" height="4" rx="2"/><rect x="4" y="16" width="7" height="4" rx="2"/><rect x="4" y="22.500" width="7" height="4" rx="2"/></g></svg></button>
    </div>
    <button class="help" aria-label="Help"><svg viewBox="0 0 30 30"><circle cx="15" cy="15" r="13"/><path d="M10 11q0-5 5-5t5 4q0 2-3 4-2 1-2 4" stroke-width="1.300"/><circle cx="15" cy="22" r="2"/></svg></button>
  </nav>
</div>
</body>
</html>
```
FILE: styles.css
```css
* { box-sizing: border-box; }
body { margin: 0; height: 100vh; display: flex; flex-direction: column; overflow: hidden; font: 15px "Liberation Sans", Arial, sans-serif; color: #131722; background: #e0e3eb; }
button { font: inherit; color: inherit; background: none; border: 0; padding: 0; margin: 0; display: flex; align-items: center; justify-content: center; white-space: nowrap; }
svg { flex: none; }
button svg, svg.chev, .box, .warn, .plus { fill: none; stroke: #131722; }
svg.chev { width: 10px; height: 10px; stroke-width: 1.5; }
.defs { display: none; }
.grow { flex: 1; }

.browser { position: relative; height: 54px; flex: none; border-bottom: 1px solid #a9abad; background: #eef0f1; font-family: "Noto Sans", sans-serif; }
.address-row { height: 24px; display: flex; }
.nav-icons { display: flex; gap: 12px; padding: 2px 0 0 10px; width: 120px; height: 20px; }
.nav-icons svg { width: 16px; height: 16px; stroke: #555; stroke-width: 2; }
.nav-icons .off svg { stroke: #ccc; }
.url { flex: 1; height: 24px; background: #fff; border: 1px solid #b0b3b5; border-top: 0; border-radius: 0 0 0 4px; display: flex; align-items: center; padding: 0 0 4px 9px; font-size: 14px; color: #808080; }
.lock { width: 9px; height: 12px; }
.secure { color: #0b8043; padding: 0 9px; border-right: 1px solid #bbb; margin-right: 8px; line-height: 16px; }
.https { color: #0b8043; }
.address b { font-weight: 400; color: #111; }
.kebab { width: 28px; text-align: center; font-size: 18px; line-height: 24px; }
.bookmarks { display: flex; gap: 13px; height: 29px; padding-left: 11px; align-items: center; font-size: 13px; overflow: hidden; }
.bookmarks a { display: flex; align-items: center; gap: 8px; color: #222; text-decoration: none; white-space: nowrap; }
.bookmarks svg { width: 14px; height: 12px; }
.bookmarks .apps { width: 14px; height: 14px; stroke-width: 3; }
.notice { position: absolute; top: 0; right: 20px; width: 474px; height: 51px; background: #f0f1f3; border: 1px solid #999; border-top: 0; border-radius: 0 0 3px 3px; box-shadow: 0 1px 3px #0006; }
.notice strong { position: absolute; left: 59px; top: 20px; font: bold 16px/22px "Noto Sans", sans-serif; color: #222; }
.bubble { position: absolute; left: 10px; top: 0; width: 40px; height: 29px; }
.ghosts { position: absolute; left: 122px; top: 0; width: 310px; height: 28px; }
.ghost-links { position: absolute; inset: 29px 6px auto 10px; display: flex; gap: 13px; color: #d0d2d4; font-size: 13px; line-height: 20px; }
.ghost-links i { font-style: normal; display: flex; align-items: center; gap: 9px; }
.ghost-links svg { width: 14px; height: 12px; opacity: .15; }
.ghost-links .more { margin-left: auto; }
.close { position: absolute; right: 8px; top: -11px; }
.close svg { width: 26px; height: 26px; stroke: none; }

.app { flex: 1; display: flex; min-height: 0; overflow: hidden; }
.left-bar { position: relative; width: 57px; background: #fff; display: flex; flex-direction: column; margin-right: 5px; }
.profile { position: relative; height: 54px; border-bottom: 1px solid #dcdfe6; padding: 10px 12px; }
.avatar { width: 33px; height: 33px; background: #6ba05f; color: #fff; border-radius: 2px; font-size: 28px; }
.badge { position: absolute; left: 34px; top: 6px; width: 17px; height: 17px; border-radius: 9px; background: #ff4a68; color: #fff; font-size: 12px; line-height: 17px; text-align: center; }
.tools { padding: 5px 0 6px; border-bottom: 1px solid #dcdfe6; }
.tools.last, .tools.bottom { border: 0; }
.tools.bottom { margin-top: auto; padding-bottom: 22px; }
.tools button { width: 57px; height: 40px; }
.tools svg { width: 28px; height: 28px; stroke-width: 1.2; }
.tools svg.cross { stroke: #7cc0f5; stroke-width: 2; }
.handle { position: absolute; right: -5px; bottom: 66px; width: 10px; height: 30px; background: #fff; border: 1px solid #d0d3da; border-right: 0; border-radius: 5px 0 0 5px; }
.handle svg { width: 6px; height: 12px; stroke: #999; }

.center { flex: 1; min-width: 0; display: flex; flex-direction: column; gap: 4px; }
.chart-card { flex: 1; min-height: 0; display: flex; flex-direction: column; background: #fff; border-radius: 0 0 4px 4px; }
.top-bar { display: flex; height: 43px; flex: none; border-bottom: 1px solid #dcdfe6; }
.symbol { width: 111px; padding-left: 13px; justify-content: flex-start; font-weight: bold; color: #444; border-right: 1px solid #dcdfe6; }
.intervals { width: 220px; display: flex; justify-content: space-between; padding: 0 6px 0 8px; border-right: 1px solid #dcdfe6; }
.intervals .on { color: #2b95e8; }
.cell { gap: 7px; border-right: 1px solid #dcdfe6; }
.first { border-left: 1px solid #dcdfe6; }
.w43 { width: 43px; } .w112 { width: 112px; } .w114 { width: 114px; } .w118 { width: 119px; } .w81 { width: 81px; } .w96 { width: 97px; } .w175 { width: 175px; }
.w175 .chev { margin-left: 5px; }
.undo { display: flex; width: 70px; justify-content: center; gap: 14px; padding-right: 6px; }
.i16 { width: 16px; height: 16px; } .i20 { width: 20px; height: 22px; } .i22 { width: 22px; height: 22px; } .i24 { width: 24px; height: 26px; } .i26 { width: 26px; height: 26px; }
button svg.off { stroke: #bbb; }
.publish { width: 91px; background: #2196f3; color: #fff; font-size: 18px; }
.play { width: 41px; margin-left: 1px; background: #2196f3; }
.play svg { stroke: #fff; stroke-width: 1.5; }

.chart { flex: 1; min-height: 0; display: flex; }
.plot-wrap { flex: 1; min-width: 0; position: relative; }
.plot { position: absolute; inset: 0; width: 100%; height: 100%; font-family: "Noto Sans", sans-serif; }
.grid { stroke: #5a9ab5; stroke-opacity: .16; fill: none; }
.ln { fill: none; }
.navy { fill: none; stroke: #14147c; stroke-width: 1.8; }
.pink { fill: #d95fd6; }
.vol { fill: #e84fe2; }
.prices { width: 69px; height: 100%; }
.lab { font-size: 12px; fill: #555; }
.lab.w { fill: #fff; }
.lab.mid { text-anchor: middle; }
.bd { font-weight: bold; }
.legend { position: absolute; left: 13px; display: flex; align-items: center; color: #555; font-size: 15px; height: 22px; white-space: nowrap; }
.legend .chev { margin: 0 11px 0 4px; }
.legend .lt { width: 92px; height: 15px; }
.main { top: 9px; font-size: 19px; }
.box { width: 14px; height: 14px; stroke: #666; }
.mark { width: 13px; height: 14px; margin: 0 5px 0 11px; }
.ohlc { display: flex; gap: 14px; margin-left: 19px; }
.ohlc b { font-weight: 400; color: #53b987; }
.l1 { top: 36px; }
.l2 { top: 402px; }
.l3 { top: 687px; }
.l3 .lt { margin-left: 26px; }
.order { position: absolute; right: 85px; height: 23px; display: flex; border: 1px solid #4a98e6; background: #fff; font: bold 10px "Liberation Serif", serif; align-items: stretch; }
.order span { display: flex; align-items: center; justify-content: center; }
.order .pl { width: 29px; color: #3f9a1c; }
.order .qty { width: 41px; background: #3f94e9; color: #fff; }
.order .lim { width: 78px; color: #4a98e6; border-left: 5px solid #fff; background: linear-gradient(90deg, #b8d6f5 2px, transparent 2px); background-clip: padding-box; }
.o2 .qty { width: 46px; }
.order button { width: 22px; border-left: 1px solid #4a98e6; }
.order svg { width: 14px; height: 14px; stroke: #4a98e6; }
.o1 { top: 134px; }
.o2 { top: 241px; }
.warn { position: absolute; right: 6px; top: 10px; width: 18px; height: 18px; stroke: #ef8a4d; stroke-width: 1.5; }
.plus { position: absolute; right: 0; top: 30px; width: 18px; height: 19px; background: #4c525e; stroke: #fff; }
.time-row { display: flex; height: 28px; flex: none; border-bottom: 1px solid #dcdfe6; }
.times { flex: 1; min-width: 0; height: 28px; }
.axis-set { width: 69px; border-top: 1px solid #555; border-left: 1px solid #555; padding-right: 4px; }
.axis-set svg { width: 18px; height: 18px; stroke-width: 1.3; }
.range-row { display: flex; align-items: center; height: 43px; flex: none; gap: 15px; padding: 0 12px 0 17px; }
.sep { width: 1px; height: 24px; background: #dcdfe6; }

.tabs { position: relative; height: 43px; flex: none; display: flex; background: #fff; border-bottom: 1px solid #dcdfe6; border-radius: 4px 4px 0 0; }
.tabs > button { padding: 0 16px; border-right: 1px solid #dcdfe6; }
.tabs > .t1 { padding: 0 6px 0 17px; gap: 9px; }
.tabs > .bare { padding: 0 17px 0 0; border: 0; }
.dot { width: 7px; height: 7px; border-radius: 4px; background: #60b967; margin-left: 4px; }
.trade { position: absolute; left: 50%; top: 3px; transform: translateX(-87px); width: 345px; height: 42px; display: flex; background: #fff; border: 1px solid #dcdfe6; box-shadow: 0 0 3px #0003; }
.grip { width: 15px; padding: 13px 0 0 4px; }
.grip svg { width: 8px; height: 16px; }
.sell, .buy { width: 110px; flex-direction: column; align-items: flex-start; justify-content: flex-start; padding: 2px 0 0 9px; line-height: 17px; background: #feeff2; color: #444; }
.sell b { color: #ea5478; font-size: 14px; } .buy b { color: #3392e3; font-size: 14px; }
.buy { background: #ebf5fe; }
sup { color: #ea5478; font-size: 12px; line-height: 1px; }
.spread { width: 45px; text-align: center; line-height: 42px; color: #888; }
.amount { width: 43px; border: 0; padding: 2px 0 0 4px; font: inherit; color: #333; background: #fff; }
.step { width: 22px; border-left: 1px solid #dcdfe6; }
.step button { width: 21px; height: 22px; font-size: 20px; color: #333; border-bottom: 1px solid #dcdfe6; }
.step button + button { height: 20px; border: 0; }

.right-bar { width: 50px; margin-left: 6px; background: #fff; display: flex; flex-direction: column; }
.grp { padding-bottom: 6px; border-bottom: 1px solid #dcdfe6; }
.grp + .grp { padding-top: 8px; }
.grp.last { border: 0; }
.grp button { position: relative; width: 50px; height: 56px; }
.right-bar svg { width: 30px; height: 30px; stroke-width: 1.3; }
.right-bar svg.wide { width: 36px; height: 24px; }
.count { position: absolute; left: 15px; top: 6px; height: 17px; padding: 0 5px; border-radius: 9px; background: #ff4a68; color: #fff; font-size: 13px; line-height: 17px; }
.help { margin: auto 0 13px; height: 30px; }
```
